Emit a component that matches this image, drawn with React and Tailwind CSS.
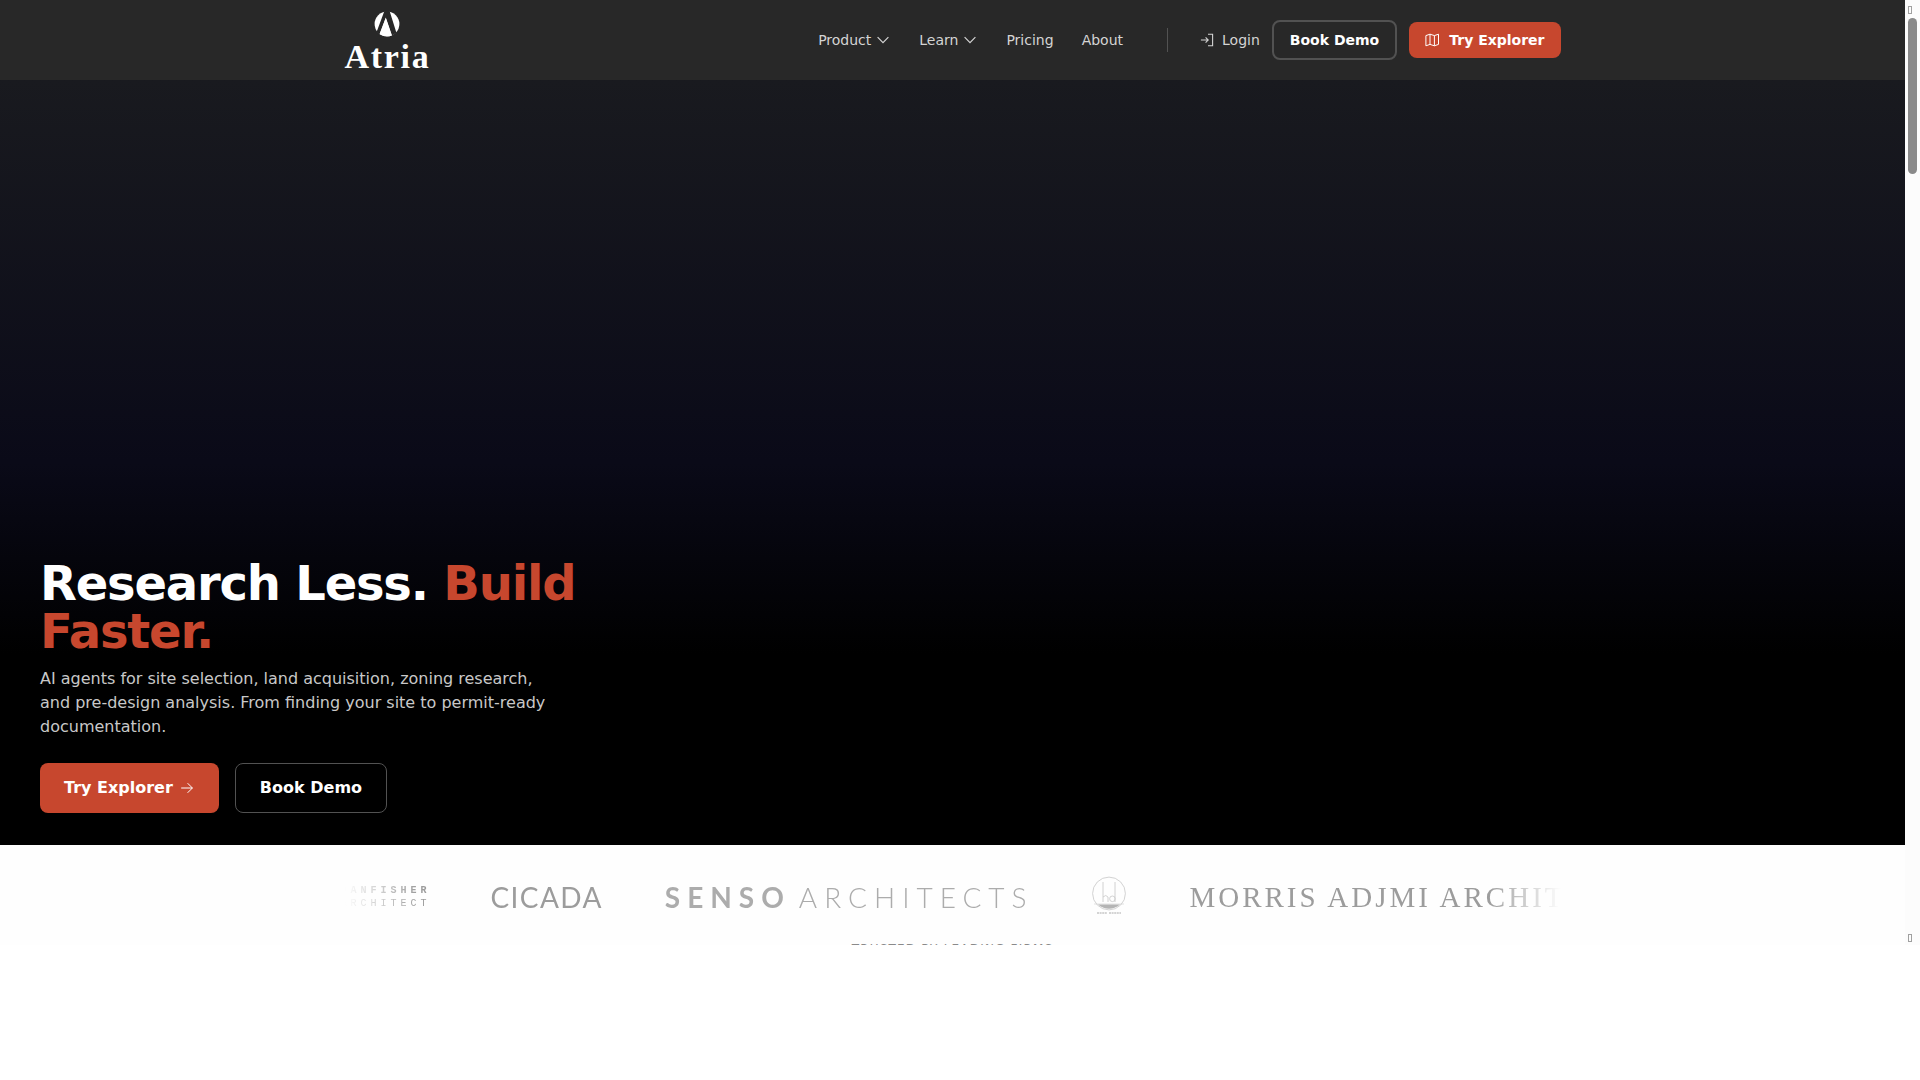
import React from 'react';

const NAV_LINKS = [
  { label: 'Product', menu: true },
  { label: 'Learn', menu: true },
  { label: 'Pricing' },
  { label: 'About' },
];

function AtriaLogo() {
  return (
    <a href="#home" className="flex flex-col items-center pt-2 text-white">
      <svg width="26" height="26" viewBox="0 0 26 26" aria-hidden="true">
        <circle cx="13" cy="13" r="12.4" fill="#ffffff" />
        <path d="M10.4 0L2.6 21L5.4 23.6L11.8 6.6L18 24.8L22.4 21.8L15.6 0Z" fill="#282828" />
        <path d="M11.8 7L5.6 23.2Q11.5 26.6 17.8 24.4Z" fill="#ffffff" />
      </svg>
      <span className="font-['Liberation_Serif',serif] text-[34px] leading-10 font-bold tracking-wider">Atria</span>
    </a>
  );
}

function ChevronDown() {
  return (
    <svg width="16" height="16" viewBox="-1 -1 16 16" fill="none" stroke="currentColor" strokeWidth="1.2" aria-hidden="true">
      <path d="M1.6 4.2L7 9.6L12.4 4.2" />
    </svg>
  );
}

function LoginIcon() {
  return (
    <svg width="14" height="14" viewBox="0 0 14 14" fill="none" stroke="currentColor" strokeWidth="1.1" aria-hidden="true">
      <path d="M0.9 7H8.2M5.6 4.4L8.2 7L5.6 9.6M8 1.2H12.6V12.8H8" />
    </svg>
  );
}

function MapIcon() {
  return (
    <svg width="16" height="16" viewBox="0 -1 16 16" fill="none" stroke="currentColor" strokeWidth="1" strokeLinejoin="round" aria-hidden="true">
      <path d="M0.9 2.6L5 1.2L9.4 2.6L13.5 1.2V11.4L9.4 12.8L5 11.4L0.9 12.8ZM5 1.2V11.4M9.4 2.6V12.8" />
    </svg>
  );
}

function ArrowRight() {
  return (
    <svg width="14" height="14" viewBox="0 0 14 14" fill="none" stroke="currentColor" strokeWidth="1" aria-hidden="true">
      <path d="M0.2 7H11.4M6.6 2.2L11.4 7L6.6 11.8" />
    </svg>
  );
}

function Header() {
  return (
    <header className="bg-[#282828]">
      <div className="mx-auto flex h-20 max-w-7xl items-center justify-between px-8">
        <AtriaLogo />
        <div className="flex items-center text-sm text-[#d4d4d4]">
          <nav className="flex items-center gap-7">
            {NAV_LINKS.map((item) =>
              item.menu ? (
                <button key={item.label} type="button" className="flex items-center gap-1">
                  {item.label}
                  <ChevronDown />
                </button>
              ) : (
                <a key={item.label} href="#nav">{item.label}</a>
              )
            )}
          </nav>
          <div className="mr-8 ml-11 h-6 w-px bg-[#525252]" />
          <div className="flex items-center gap-3">
            <a href="#login" className="flex items-center gap-2">
              <LoginIcon />
              Login
            </a>
            <button type="button" className="rounded-lg border-2 border-[#525252] px-4 py-2 font-bold text-white">
              Book Demo
            </button>
            <button type="button" className="flex items-center gap-2 rounded-lg bg-[#c7472e] px-4 py-2 font-bold text-white">
              <MapIcon />
              Try Explorer
            </button>
          </div>
        </div>
      </div>
    </header>
  );
}

function Hero() {
  return (
    <section className="flex flex-1 flex-col justify-end bg-linear-to-b/srgb from-[#191a1f] via-[#0a0a18] via-50% to-black to-75% px-10 pb-8">
      <div className="max-w-xl">
        <h1 className="text-5xl leading-none font-bold tracking-tight text-white">
          Research Less. <span className="text-[#c7472e]">Build Faster.</span>
        </h1>
        <p className="mt-3 max-w-lg text-base text-[#c8c8c8]">
          AI agents for site selection, land acquisition, zoning research, and pre-design analysis. From finding your
          site to permit-ready documentation.
        </p>
        <div className="mt-6 flex gap-4 font-bold text-white">
          <button type="button" className="flex items-center gap-2 rounded-lg bg-[#c7472e] px-6 py-3">
            Try Explorer
            <ArrowRight />
          </button>
          <button type="button" className="rounded-lg border border-[#525252] px-6 py-3">
            Book Demo
          </button>
        </div>
      </div>
    </section>
  );
}

function SealLogo() {
  return (
    <svg width="42" height="42" viewBox="0 0 42 42" fill="none" stroke="#c6c6c6" className="shrink-0" aria-hidden="true">
      <circle cx="18" cy="17.5" r="16.4" strokeWidth="0.8" />
      <path d="M12 6V26M24 6V26M12 21Q15 18 17 21V26" strokeWidth="0.8" />
      <circle cx="21.4" cy="22.8" r="2.8" strokeWidth="0.8" />
      <path d="M3 28H33" strokeWidth="0.5" />
      <path d="M7 28.4H29Q18 37 7 28.4Z" fill="#b4b4b4" stroke="none" />
      <path d="M6 37H16M18 37H30" strokeWidth="1.4" strokeDasharray="2 0.6" />
    </svg>
  );
}

function TrustedBy() {
  return (
    <section className="h-25 overflow-hidden bg-[#fefefe] pt-7">
      <div className="mx-auto max-w-7xl px-8">
        <div className="flex h-12 items-center gap-14 overflow-hidden whitespace-nowrap text-[#9c9c9c] mask-r-from-94% mask-l-from-94%">
          <div className="flex w-[86px] shrink-0 flex-col items-end font-['Liberation_Mono',monospace] text-[10px] leading-[13px] tracking-[4px]">
            <span className="font-bold">DANFISHER</span>
            <span>ARCHITECT</span>
          </div>
          <span className="px-1 font-[Lato,sans-serif] text-[28px] leading-8 tracking-wider">CICADA</span>
          <span className="flex gap-2 px-0.5 font-[Lato,sans-serif] text-[28px] leading-8 tracking-[7px] text-[#acacac]">
            <b>SENSO</b>
            <span className="font-light">ARCHITECTS</span>
          </span>
          <SealLogo />
          <span className="font-['Liberation_Serif',serif] text-[29px] leading-8 tracking-[3px]">MORRIS ADJMI ARCHITECTS</span>
        </div>
        <p className="mt-5 text-center text-xs tracking-widest text-[#8a8a8a]">TRUSTED BY LEADING FIRMS</p>
      </div>
    </section>
  );
}

function ScrollRail() {
  return (
    <div className="flex w-[15px] flex-col items-start bg-[#fcfcfc] px-[3px] pt-1 pb-[3px]" aria-hidden="true">
      <div className="mt-0.5 h-2 w-1 border border-[#a0a0a0]" />
      <div className="mt-1 h-39 w-[9px] rounded-full bg-[#8a8a8a]" />
      <div className="mt-auto h-2 w-1 border border-[#a0a0a0]" />
    </div>
  );
}

export default function App() {
  return (
    <div className="min-h-screen bg-white font-['DejaVu_Sans',sans-serif]">
      <div className="flex min-h-[87.5vh]">
        <main className="flex min-w-0 flex-1 flex-col">
          <Header />
          <Hero />
          <TrustedBy />
        </main>
        <ScrollRail />
      </div>
    </div>
  );
}
